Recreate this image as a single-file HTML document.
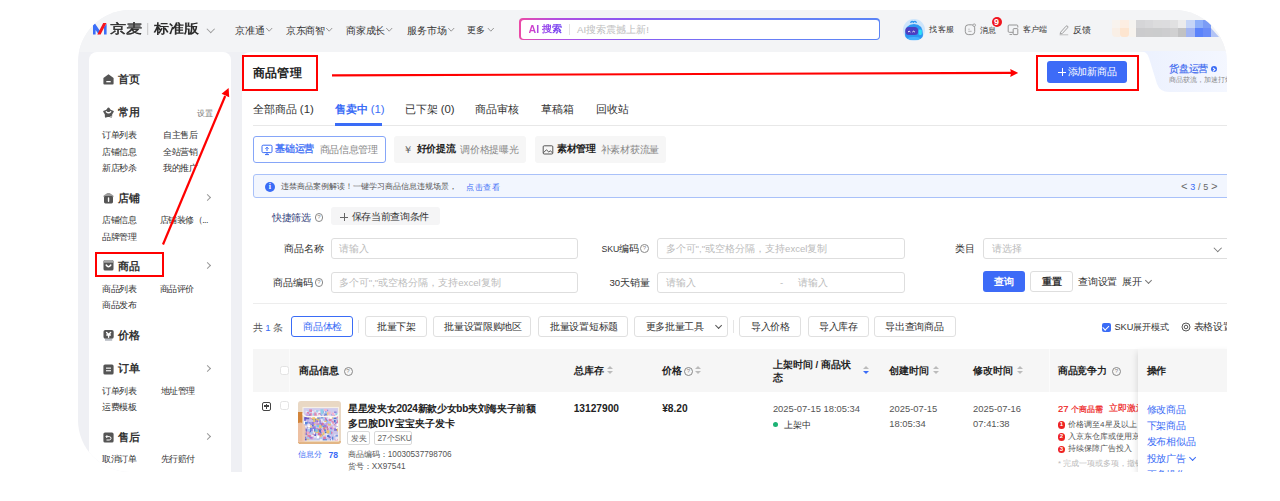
<!DOCTYPE html>
<html><head><meta charset="utf-8">
<style>
html,body{margin:0;padding:0;background:#fff;width:1280px;height:501px;overflow:hidden;font-family:"Liberation Sans",sans-serif;}
#frame{position:absolute;left:78px;top:10px;width:1149px;height:462px;background:#eff0f4;border-radius:52px 53px 0 52px;overflow:hidden;}
#in{position:absolute;left:-78px;top:-10px;width:1280px;height:501px;}
.a{position:absolute;}
.t{position:absolute;white-space:nowrap;line-height:1;color:#333;}
.b{font-weight:bold;}
.chev{position:absolute;width:4px;height:4px;border-right:1px solid #888;border-bottom:1px solid #888;transform:rotate(45deg);}
.rchev{position:absolute;width:4px;height:4px;border-right:1px solid #999;border-bottom:1px solid #999;transform:rotate(-45deg);}
.box{position:absolute;box-sizing:border-box;}
</style></head><body>
<div id="frame"><div id="in">

<!-- ===== HEADER ===== -->
<div class="a" style="left:0;top:0;width:1280px;height:51.5px;background:#f3f4f6"></div>
<svg class="a" style="left:0;top:0" width="1280" height="60">
  <polygon points="93,24.3 94.8,23.2 100.2,31.2 98.6,34.6 95.6,30 95.6,34.6 93,34.6" fill="#3b6ef8"/>
  <polygon points="104,27 106.6,23.8 106.6,34.6 104,34.6" fill="#3b6ef8"/>
  <polygon points="103.2,23 106.5,23 100.6,34.6 97.3,34.6" fill="#f5141e"/>
  <rect x="147.2" y="23" width="1" height="12" fill="#c8c8c8"/>
</svg>
<div class="t" style="left:110.2px;top:23px;font-size:12.6px;color:#2b2b2b;-webkit-text-stroke:0.45px #2b2b2b;transform:scaleX(1.24);transform-origin:0 0">京麦</div>
<div class="t b" style="left:153.6px;top:22.8px;font-size:12.6px;color:#2b2b2b;transform:scaleX(1.15);transform-origin:0 0">标准版</div>
<div class="chev" style="left:208px;top:26px;width:4.5px;height:4.5px;border-color:#999"></div>

<div class="t" style="left:234.5px;top:25.6px;font-size:9.6px">京准通</div>
<div class="t" style="left:286px;top:25.6px;font-size:9.6px;letter-spacing:-0.4px">京东商智</div>
<div class="t" style="left:346.4px;top:25.6px;font-size:9.6px;letter-spacing:-0.4px">商家成长</div>
<div class="t" style="left:406.5px;top:25.6px;font-size:9.8px">服务市场</div>
<div class="t" style="left:467px;top:25.6px;font-size:9.2px">更多</div>
<svg class="a" style="left:0;top:0" width="520" height="40" fill="none" stroke="#8c8c8c" stroke-width="0.9">
<polyline points="266.2,28 269.2,31.2 272.2,28"/><polyline points="326.2,28 329.2,31.2 332.2,28"/><polyline points="386.2,28 389.2,31.2 392.2,28"/><polyline points="448.2,28 451.2,31.2 454.2,28"/><polyline points="487.8,28 490.8,31.2 493.8,28"/>
</svg>
<!-- search -->
<div class="box" style="left:519.4px;top:18.4px;width:361px;height:21.8px;border-radius:4px;background:linear-gradient(90deg,#ec4aa6 0%,#b44ee0 10%,#8a58f2 30%,#6a7ef6 65%,#5b84f6 100%);"></div>
<div class="box" style="left:520.8px;top:19.8px;width:358.2px;height:19px;border-radius:3px;background:#fff;"></div>
<div class="t b" style="left:528.6px;top:24.2px;font-size:10.6px;background:linear-gradient(90deg,#e03cc0,#a848e6);-webkit-background-clip:text;color:transparent">AI</div>
<div class="t b" style="left:541.8px;top:24.3px;font-size:10px;background:linear-gradient(90deg,#a048ea,#6a3cf2);-webkit-background-clip:text;color:transparent">搜索</div>
<div class="a" style="left:569px;top:24px;width:1px;height:11px;background:#e2e2e2"></div>
<div class="t" style="left:577px;top:25.3px;font-size:9.7px;color:#bdbdbd">AI搜索震撼上新!</div>

<!-- right tools -->
<svg class="a" style="left:900px;top:15px" width="30" height="30" viewBox="0 0 30 30">
  <circle cx="14" cy="15" r="11" fill="#cde5fb"/>
  <path d="M5 20 Q5 9 14 9 Q23 9 23 20 Q23 25 14 25 Q5 25 5 20Z" fill="#2d97f2"/>
  <rect x="5.3" y="12" width="12.8" height="8" rx="3.5" fill="#4b3fc2"/>
  <path d="M8 17 q1.2 -1.6 2.4 0 M12.4 17 q1.2 -1.6 2.4 0" stroke="#fff" stroke-width="1" fill="none"/>
  <rect x="18.6" y="14.5" width="3.2" height="5.5" rx="1.2" fill="#2ee0f8"/>
  <path d="M10.5 7.8 q1.5 -2.2 3 -0.6 q1.5 -2 3 0.6" stroke="#2d97f2" stroke-width="1.4" fill="none"/>
  <ellipse cx="14" cy="23.5" rx="6" ry="1.6" fill="#45b4ff"/>
</svg>
<div class="t" style="left:929.4px;top:26px;font-size:8.2px;letter-spacing:0.4px">找客服</div>
<svg class="a" style="left:963px;top:23px" width="14" height="14" viewBox="0 0 14 14">
  <rect x="2.3" y="1.8" width="9.4" height="9.8" rx="3" fill="none" stroke="#8a8a8a" stroke-width="0.9"/>
  <line x1="5.2" y1="6.2" x2="6.8" y2="6.2" stroke="#999" stroke-width="0.6"/>
  <line x1="5.2" y1="8.3" x2="8.6" y2="8.3" stroke="#999" stroke-width="0.7"/>
  <circle cx="11.2" cy="2.2" r="1.3" fill="#f4f5f7" stroke="#8a8a8a" stroke-width="0.7"/>
</svg>
<div class="t" style="left:979.8px;top:25.6px;font-size:8.4px;letter-spacing:0.7px">消息</div>
<div class="a" style="left:991.6px;top:17px;width:10px;height:10px;border-radius:50%;background:#f0141e;color:#fff;font-size:9px;line-height:10px;text-align:center;font-weight:bold">9</div>
<svg class="a" style="left:1007px;top:24px" width="12" height="12" viewBox="0 0 12 12">
  <path d="M6 8.3 H2.2 Q1.2 8.3 1.2 7.3 V2 Q1.2 1 2.2 1 H9.8 Q10.8 1 10.8 2 V3.5" fill="none" stroke="#8a8a8a" stroke-width="0.9"/>
  <rect x="6.2" y="4.6" width="4.6" height="6" rx="0.8" fill="none" stroke="#8a8a8a" stroke-width="0.9"/>
  <line x1="2.5" y1="10.5" x2="5.2" y2="10.5" stroke="#8a8a8a" stroke-width="0.8"/>
</svg>
<div class="t" style="left:1022.6px;top:26.3px;font-size:8.2px;letter-spacing:0.35px">客户端</div>
<svg class="a" style="left:1058px;top:24px" width="12" height="12" viewBox="0 0 12 12">
  <path d="M2.6 8.2 L8 2.2 Q8.8 1.4 9.6 2.2 Q10.4 3 9.6 3.8 L4.2 9.6 L2.2 9.9Z" fill="none" stroke="#8a8a8a" stroke-width="0.8"/>
  <line x1="1.5" y1="10.8" x2="10.2" y2="10.8" stroke="#aaa" stroke-width="0.7"/>
</svg>
<div class="t" style="left:1073px;top:26px;font-size:8.6px">反馈</div>

<!-- mosaic -->
<div class="a" style="left:1112px;top:20px;width:107px;height:17px;">
  <div class="a" style="left:0;top:0;width:8px;height:8px;background:#f8f3ee"></div>
  <div class="a" style="left:0;top:8px;width:8px;height:9px;background:#f9efe6;border-bottom-left-radius:4px"></div>
  <div class="a" style="left:8px;top:0;width:8.5px;height:8px;background:#fdeee2"></div>
  <div class="a" style="left:8px;top:8px;width:8.5px;height:9px;background:#fde5d0;border-bottom-left-radius:3px;border-bottom-right-radius:3px"></div>
  <div class="a" style="left:16.5px;top:0;width:7.5px;height:8px;background:#f5f3f0"></div>
  <div class="a" style="left:16.5px;top:8px;width:7.5px;height:9px;background:#f7f3ee"></div>
  <div class="a" style="left:24px;top:0;width:8.5px;height:8px;background:#d5d5d7"></div>
  <div class="a" style="left:24px;top:8px;width:8.5px;height:9px;background:#cbcbcd"></div>
  <div class="a" style="left:32.5px;top:0;width:8.5px;height:8px;background:#d8d8da"></div>
  <div class="a" style="left:32.5px;top:8px;width:8.5px;height:9px;background:#cccccd"></div>
  <div class="a" style="left:41px;top:0;width:9px;height:8px;background:#dcdcdd"></div>
  <div class="a" style="left:41px;top:8px;width:9px;height:9px;background:#cbcccd"></div>
  <div class="a" style="left:50px;top:0;width:8px;height:8px;background:#dcdcde"></div>
  <div class="a" style="left:50px;top:8px;width:8px;height:9px;background:#cdcdcf"></div>
  <div class="a" style="left:58px;top:0;width:8px;height:8px;background:#e0e0e1"></div>
  <div class="a" style="left:58px;top:8px;width:8px;height:9px;background:#d0d0d1"></div>
  <div class="a" style="left:66px;top:0;width:8px;height:8px;background:#ebebec"></div>
  <div class="a" style="left:66px;top:8px;width:8px;height:9px;background:#c2c2c3"></div>
  <div class="a" style="left:74px;top:0;width:8.5px;height:8px;background:#c5d5f7"></div>
  <div class="a" style="left:74px;top:8px;width:8.5px;height:9px;background:#a2b5f2"></div>
  <div class="a" style="left:82.5px;top:0;width:8.5px;height:8px;background:#8eb0fa"></div>
  <div class="a" style="left:82.5px;top:8px;width:8.5px;height:9px;background:#5b83fb"></div>
  <div class="a" style="left:91px;top:0;width:8px;height:8px;background:#7b9cf5;border-top-right-radius:5px"></div>
  <div class="a" style="left:91px;top:8px;width:8px;height:9px;background:#6a8cf8"></div>
  <div class="a" style="left:99px;top:8px;width:8px;height:9px;background:#b3c4f5;clip-path:polygon(0 0,0 100%,100% 100%)"></div>
</div>

<!-- ===== SIDEBAR ===== -->
<div class="box" style="left:88.8px;top:51.5px;width:142px;height:440px;background:#fff;border-radius:8px 8px 0 0"></div>
<svg width="0" height="0" style="position:absolute"><defs>
<g id="ic-home"><path d="M5.5 0.3 L10.6 4 V9.6 Q10.6 10.6 9.6 10.6 H1.4 Q0.4 10.6 0.4 9.6 V4Z" fill="#555"/><rect x="3.3" y="7" width="4.4" height="1.3" fill="#fff"/></g>
<g id="ic-star"><polygon points="5.50,1.40 7.26,3.57 9.87,4.58 8.35,6.93 8.20,9.72 5.50,9.00 2.80,9.72 2.65,6.93 1.13,4.58 3.74,3.57" fill="#555" stroke="#555" stroke-width="1.8" stroke-linejoin="round"/><path d="M6.6 9.6 L9.2 8.6 L8.6 10.6Z" fill="#bbb"/><path d="M3.3 4.7 Q5.5 6.8 7.7 4.7" stroke="#fff" stroke-width="1.3" fill="none" stroke-linecap="round"/></g>
<g id="ic-shop"><path d="M0.2 3.8 Q0.2 2.6 1.4 2 L4.4 0 H6.6 L9.6 2 Q10.8 2.6 10.8 3.8Z" fill="#9a9a9a"/><rect x="1" y="3" width="9" height="7.4" rx="1.4" fill="#555"/><rect x="4.85" y="4.3" width="1.4" height="4.6" rx="0.7" fill="#fff"/></g>
<g id="ic-goods"><rect x="0.5" y="0" width="10" height="10.5" rx="1.6" fill="#555"/><path d="M0.5 2.8 V1.6 Q0.5 0 2.1 0 H8.9 Q10.5 0 10.5 1.6 V2.8Z" fill="#a8a8a8"/><path d="M3.2 5 Q5.5 8.4 7.8 5" stroke="#fff" stroke-width="1.5" fill="none" stroke-linecap="round"/></g>
<g id="ic-price"><rect x="0.5" y="0" width="10.2" height="8.8" rx="1.8" fill="#555"/><rect x="2" y="8.8" width="7.2" height="2" fill="#b8bcc4"/><path d="M3.6 2.6 L5.6 4.6 L7.6 2.6 M5.6 4.4 V7.2 M3.8 5 H7.4" stroke="#fff" stroke-width="1.4" fill="none" stroke-linecap="round"/></g>
<g id="ic-order"><rect x="0.4" y="0.4" width="10.2" height="10.2" rx="1.6" fill="#555"/><rect x="3" y="3.6" width="5" height="1.1" fill="#fff"/><rect x="3" y="6.2" width="5" height="1.1" fill="#fff"/></g>
<g id="ic-after"><rect x="0.4" y="0.4" width="10.2" height="10.2" rx="1.6" fill="#555"/><path d="M4.2 3.2 L3 4.6 L4.2 6 M3 4.6 H6.2 Q8 4.6 8 6.3 Q8 8 6.2 8 H3.5" stroke="#fff" stroke-width="1" fill="none"/></g>
</defs></svg>
<div class="t" style="left:117.6px;top:74.00px;font-size:11px;color:#333;font-weight:bold">首页</div>
<svg class="a" style="left:103px;top:74.3px" width="11" height="11" viewBox="0 0 11 11"><use href="#ic-home"/></svg>
<div class="t" style="left:117.6px;top:107.00px;font-size:11px;color:#333;font-weight:bold">常用</div>
<svg class="a" style="left:103px;top:107.3px" width="11" height="11" viewBox="0 0 11 11"><use href="#ic-star"/></svg>
<div class="t" style="left:117.6px;top:192.50px;font-size:11px;color:#333;font-weight:bold">店铺</div>
<svg class="a" style="left:103px;top:192.8px" width="11" height="11" viewBox="0 0 11 11"><use href="#ic-shop"/></svg>
<div class="t" style="left:117.6px;top:260.80px;font-size:11px;color:#333;font-weight:bold">商品</div>
<svg class="a" style="left:103px;top:260.3px" width="11" height="11" viewBox="0 0 11 11"><use href="#ic-goods"/></svg>
<div class="t" style="left:117.6px;top:330.10px;font-size:11px;color:#333;font-weight:bold">价格</div>
<svg class="a" style="left:103px;top:330px" width="11" height="11" viewBox="0 0 11 11"><use href="#ic-price"/></svg>
<div class="t" style="left:117.6px;top:363.30px;font-size:11px;color:#333;font-weight:bold">订单</div>
<svg class="a" style="left:103px;top:363.6px" width="11" height="11" viewBox="0 0 11 11"><use href="#ic-order"/></svg>
<div class="t" style="left:117.6px;top:431.50px;font-size:11px;color:#333;font-weight:bold">售后</div>
<svg class="a" style="left:103px;top:431.8px" width="11" height="11" viewBox="0 0 11 11"><use href="#ic-after"/></svg>
<div class="rchev" style="left:205px;top:194.8px"></div>
<div class="rchev" style="left:205px;top:263.1px"></div>
<div class="rchev" style="left:205px;top:365.6px"></div>
<div class="rchev" style="left:205px;top:433.8px"></div>
<div class="t" style="left:197px;top:108.85px;font-size:8.3px;color:#777;">设置</div>
<div class="t" style="left:102.2px;top:131.20px;font-size:8.6px;color:#333;letter-spacing:-0.5px;">订单列表</div>
<div class="t" style="left:163.3px;top:131.20px;font-size:8.6px;color:#333;letter-spacing:-0.5px;">自主售后</div>
<div class="t" style="left:102.2px;top:147.70px;font-size:8.6px;color:#333;letter-spacing:-0.5px;">店铺信息</div>
<div class="t" style="left:163.3px;top:147.70px;font-size:8.6px;color:#333;letter-spacing:-0.5px;">全站营销</div>
<div class="t" style="left:102.2px;top:163.70px;font-size:8.6px;color:#333;letter-spacing:-0.5px;">新店秒杀</div>
<div class="t" style="left:163.3px;top:163.70px;font-size:8.6px;color:#333;letter-spacing:-0.5px;">我的推广</div>
<div class="t" style="left:102.2px;top:216.20px;font-size:8.6px;color:#333;letter-spacing:-0.5px;">店铺信息</div>
<div class="t" style="left:159.7px;top:216.20px;font-size:8.6px;color:#333;letter-spacing:-0.5px;">店铺装修（...</div>
<div class="t" style="left:102.2px;top:232.70px;font-size:8.6px;color:#333;letter-spacing:-0.5px;">品牌管理</div>
<div class="t" style="left:102.2px;top:285.00px;font-size:8.6px;color:#333;letter-spacing:-0.5px;">商品列表</div>
<div class="t" style="left:159.7px;top:285.00px;font-size:8.6px;color:#333;letter-spacing:-0.5px;">商品评价</div>
<div class="t" style="left:102.2px;top:301.00px;font-size:8.6px;color:#333;letter-spacing:-0.5px;">商品发布</div>
<div class="t" style="left:102.2px;top:386.50px;font-size:8.6px;color:#333;letter-spacing:-0.5px;">订单列表</div>
<div class="t" style="left:160.7px;top:386.50px;font-size:8.6px;color:#333;letter-spacing:-0.5px;">地址管理</div>
<div class="t" style="left:102.2px;top:403.20px;font-size:8.6px;color:#333;letter-spacing:-0.5px;">运费模板</div>
<div class="t" style="left:102.2px;top:455.20px;font-size:8.6px;color:#333;letter-spacing:-0.5px;">取消订单</div>
<div class="t" style="left:160.7px;top:455.20px;font-size:8.6px;color:#333;letter-spacing:-0.5px;">先行赔付</div>

<!-- ===== MAIN ===== -->
<div class="box" style="left:241.8px;top:51.5px;width:1000px;height:440px;background:#fff;border-radius:8px 0 0 0"></div>
<!-- MAINSTART -->
<div class="t" style="left:252.6px;top:67.35px;font-size:12.1px;color:#222;letter-spacing:0.34px;font-weight:bold">商品管理</div>
<svg class="a" style="left:1130px;top:51px" width="100" height="42" viewBox="1130 51 100 42"><defs><linearGradient id="pg" x1="0" x2="1"><stop offset="0" stop-color="#ecf1fe"/><stop offset="1" stop-color="#f4f7ff"/></linearGradient></defs><path d="M1140 51 Q1147 51 1149 58 L1157 84 Q1160 92 1169 92 L1230 92 L1230 51Z" fill="url(#pg)"/></svg>
<div class="t" style="left:1169.2px;top:64.10px;font-size:9.6px;color:#3563ee;letter-spacing:-0.23px;-webkit-text-stroke:0.15px #3563ee">货盘运营</div>
<div class="a" style="left:1210.8px;top:65.8px;width:6.4px;height:6.4px;border-radius:50%;background:#3b6cf5"></div>
<div class="a" style="left:1212.4px;top:67.8px;width:1.8px;height:1.8px;border-right:0.8px solid #fff;border-top:0.8px solid #fff;transform:rotate(45deg)"></div>
<div class="t" style="left:1169.2px;top:77.35px;font-size:6.9px;color:#888;">商品获流，加速打爆</div>
<div class="box" style="left:1046.6px;top:61.1px;width:80.10px;height:21.60px;background:#3d6bf7;border-radius:3px"></div>
<div class="box" style="left:1058px;top:71.6px;width:8.00px;height:1.10px;background:#fff"></div>
<div class="box" style="left:1061.5px;top:67.9px;width:1.10px;height:8.40px;background:#fff"></div>
<div class="t" style="left:1067.5px;top:66.95px;font-size:9.7px;color:#fff;letter-spacing:-0.24px;">添加新商品</div>
<div class="t" style="left:252.7px;top:104.20px;font-size:11.4px;color:#333;">全部商品<span style="font-weight:normal"> (1)</span></div>
<div class="t" style="left:334.5px;top:104.20px;font-size:11.4px;color:#3a6cf6;font-weight:bold">售卖中<span style="font-weight:normal"> (1)</span></div>
<div class="t" style="left:404.5px;top:104.20px;font-size:11.4px;color:#333;">已下架<span style="font-weight:normal"> (0)</span></div>
<div class="t" style="left:475px;top:104.20px;font-size:11.4px;color:#333;">商品审核</div>
<div class="t" style="left:541px;top:104.20px;font-size:11.4px;color:#333;">草稿箱</div>
<div class="t" style="left:596px;top:104.20px;font-size:11.4px;color:#333;">回收站</div>
<div class="box" style="left:253px;top:124.7px;width:977.00px;height:1.00px;background:#e8e8e8"></div>
<div class="box" style="left:334.6px;top:123.4px;width:47.20px;height:2.30px;background:#3a6cf6"></div>
<div class="box" style="left:253px;top:136.2px;width:133.00px;height:26.80px;border:1px solid #86a6f8;border-radius:3px;background:#fff"></div>
<svg class="a" style="left:261px;top:144px" width="12" height="12" viewBox="0 0 12 12"><rect x="1" y="1.2" width="10" height="7.4" rx="1.2" fill="none" stroke="#3a6cf6" stroke-width="1"/><path d="M6 7 V3.3 M4.4 4.8 L6 3.2 L7.6 4.8" stroke="#3a6cf6" stroke-width="1" fill="none"/><path d="M4 10.6 H8 M6 8.6 V10.6" stroke="#3a6cf6" stroke-width="1"/></svg>
<div class="t" style="left:275.3px;top:144.40px;font-size:9.6px;color:#3a6cf6;letter-spacing:-0.27px;-webkit-text-stroke:0.3px #3a6cf6">基础运营</div>
<div class="t" style="left:319.6px;top:144.95px;font-size:9.5px;color:#888;letter-spacing:-0.34px;">商品信息管理</div>
<div class="box" style="left:394px;top:136.2px;width:132.00px;height:26.80px;background:#f6f6f6;border-radius:3px"></div>
<div class="t" style="left:402.8px;top:144.70px;font-size:9.6px;color:#555;">￥</div>
<div class="t" style="left:416.5px;top:144.40px;font-size:9.6px;color:#222;letter-spacing:-0.20px;font-weight:bold">好价提流</div>
<div class="t" style="left:460.2px;top:144.90px;font-size:9.6px;color:#888;letter-spacing:-0.25px;">调价格提曝光</div>
<div class="box" style="left:535px;top:136.2px;width:131.40px;height:26.80px;background:#f6f6f6;border-radius:3px"></div>
<svg class="a" style="left:542px;top:144px" width="12" height="12" viewBox="0 0 12 12"><rect x="1.2" y="1.8" width="9.6" height="8.2" rx="1" fill="none" stroke="#444" stroke-width="0.9"/><path d="M1.6 8.6 L4.4 5.8 L6.8 8 L8.2 6.8 L10.4 8.6" stroke="#444" stroke-width="0.9" fill="none"/></svg>
<div class="t" style="left:557px;top:144.40px;font-size:9.6px;color:#222;letter-spacing:-0.40px;font-weight:bold">素材管理</div>
<div class="t" style="left:600.6px;top:144.90px;font-size:9.6px;color:#888;letter-spacing:-0.25px;">补素材获流量</div>
<div class="box" style="left:253px;top:174.3px;width:987.00px;height:24.20px;background:#f2f6fe;border:1px solid #a9c1f9;border-radius:3px"></div>
<div class="a" style="left:264.8px;top:181.8px;width:10px;height:10px;border-radius:50%;background:#3a6cf6;color:#fff;font-size:8px;line-height:10px;text-align:center;font-weight:bold;font-family:Liberation Serif,serif">i</div>
<div class="t" style="left:281px;top:183.00px;font-size:8.0px;color:#555;">违禁商品案例解读！一键学习商品信息违规场景，</div>
<div class="t" style="left:466px;top:182.80px;font-size:8.4px;color:#3a6cf6;letter-spacing:0.65px;">点击查看</div>
<div class="t" style="left:1181px;top:182.30px;font-size:9px;color:#666;letter-spacing:0.1px"><span style="font-size:11px;font-family:Liberation Mono">&lt;</span> <span style="color:#3a6cf6">3</span> / 5 <span style="font-size:11px;font-family:Liberation Mono">&gt;</span></div>
<div class="t" style="left:271.8px;top:212.50px;font-size:9.6px;color:#33407a;letter-spacing:-0.20px;">快捷筛选</div>
<div class="a" style="left:314.5px;top:213.4px;width:6.8px;height:6.8px;border:0.8px solid #888;border-radius:50%;color:#888;font-size:6px;line-height:6.8px;text-align:center">?</div>
<div class="box" style="left:331px;top:207.4px;width:108.60px;height:18.10px;background:#f5f5f6;border-radius:3px"></div>
<div class="box" style="left:340.3px;top:216.6px;width:7.80px;height:0.90px;background:#666"></div>
<div class="box" style="left:343.75px;top:212.9px;width:0.90px;height:8.20px;background:#666"></div>
<div class="t" style="left:351.6px;top:211.80px;font-size:9.6px;color:#333;letter-spacing:-0.32px;">保存当前查询条件</div>
<div class="t" style="left:284.2px;top:243.80px;font-size:9.6px;color:#333;letter-spacing:-0.20px;">商品名称</div>
<div class="box" style="left:331px;top:238.3px;width:247.20px;height:21.20px;border:1px solid #dedede;border-radius:3px"></div>
<div class="t" style="left:338.8px;top:244.20px;font-size:9.6px;color:#bbb;">请输入</div>
<div class="t" style="left:601.4px;top:243.60px;font-size:9.6px;color:#333;"><span style="font-size:8.7px">SKU</span>编码</div>
<div class="a" style="left:640px;top:244.3px;width:6.8px;height:6.8px;border:0.8px solid #888;border-radius:50%;color:#888;font-size:6px;line-height:6.8px;text-align:center">?</div>
<div class="box" style="left:657.4px;top:238.3px;width:247.60px;height:21.20px;border:1px solid #dedede;border-radius:3px"></div>
<div class="t" style="left:665.6px;top:244.40px;font-size:9.2px;color:#bbb;font-size:9.6px">多个可","或空格分隔，支持excel复制</div>
<div class="t" style="left:955.4px;top:243.80px;font-size:9.6px;color:#333;">类目</div>
<div class="box" style="left:983.4px;top:237.7px;width:256.60px;height:21.20px;border:1px solid #dedede;border-radius:3px"></div>
<div class="t" style="left:991.8px;top:243.80px;font-size:9.6px;color:#bbb;">请选择</div>
<div class="chev" style="left:1215px;top:244.8px;width:4.5px;height:4.5px;border-color:#777"></div>
<div class="t" style="left:273.2px;top:277.50px;font-size:9.6px;color:#333;">商品编码</div>
<div class="a" style="left:314.5px;top:278.4px;width:6.8px;height:6.8px;border:0.8px solid #888;border-radius:50%;color:#888;font-size:6px;line-height:6.8px;text-align:center">?</div>
<div class="box" style="left:331px;top:271.5px;width:247.20px;height:21.30px;border:1px solid #dedede;border-radius:3px"></div>
<div class="t" style="left:338.8px;top:277.90px;font-size:9.2px;color:#bbb;font-size:9.6px">多个可","或空格分隔，支持excel复制</div>
<div class="t" style="left:609.5px;top:277.60px;font-size:9.6px;color:#333;">30天销量</div>
<div class="box" style="left:657.4px;top:271.5px;width:247.60px;height:21.30px;border:1px solid #dedede;border-radius:3px"></div>
<div class="t" style="left:665.6px;top:277.70px;font-size:9.6px;color:#bbb;">请输入</div>
<div class="t" style="left:780px;top:277.70px;font-size:9.6px;color:#bbb;">-</div>
<div class="t" style="left:797.6px;top:277.70px;font-size:9.6px;color:#bbb;">请输入</div>
<div class="box" style="left:983.4px;top:271.1px;width:41.20px;height:21.40px;background:#3d6bf7;border-radius:3px"></div>
<div class="t" style="left:994.4px;top:276.90px;font-size:9.8px;color:#fff;font-weight:bold">查询</div>
<div class="box" style="left:1030px;top:271.1px;width:42.50px;height:21.40px;border:1px solid #dedede;border-radius:3px;background:#fff"></div>
<div class="t" style="left:1041.7px;top:276.95px;font-size:9.7px;color:#333;font-weight:bold">重置</div>
<div class="t" style="left:1078px;top:277.15px;font-size:9.7px;color:#333;letter-spacing:-0.20px;">查询设置</div>
<div class="t" style="left:1122px;top:277.15px;font-size:9.7px;color:#333;">展开</div>
<div class="chev" style="left:1146px;top:278.4px;width:4px;height:4px;border-color:#777"></div>
<div class="box" style="left:253px;top:303.4px;width:987.00px;height:1.00px;background:#ededed"></div>
<div class="t" style="left:252.7px;top:322.60px;font-size:9.6px;color:#555;">共 <span style="color:#3a6cf6">1</span> 条</div>
<div class="box" style="left:291.2px;top:315.5px;width:61.60px;height:21.80px;border:1px solid #3a6cf6;border-radius:3px"></div>
<div class="t" style="left:303px;top:321.80px;font-size:9.6px;color:#3a6cf6;letter-spacing:-0.20px;">商品体检</div>
<div class="box" style="left:365px;top:315.5px;width:61.60px;height:21.80px;border:1px solid #e0e0e0;border-radius:3px"></div>
<div class="t" style="left:377px;top:321.80px;font-size:9.6px;color:#333;letter-spacing:-0.28px;">批量下架</div>
<div class="box" style="left:432.5px;top:315.5px;width:98.90px;height:21.80px;border:1px solid #e0e0e0;border-radius:3px"></div>
<div class="t" style="left:444.3px;top:321.80px;font-size:9.6px;color:#333;letter-spacing:-0.33px;">批量设置限购地区</div>
<div class="box" style="left:538.2px;top:315.5px;width:89.80px;height:21.80px;border:1px solid #e0e0e0;border-radius:3px"></div>
<div class="t" style="left:550px;top:321.80px;font-size:9.6px;color:#333;letter-spacing:-0.30px;">批量设置短标题</div>
<div class="box" style="left:634.3px;top:315.5px;width:93.30px;height:21.80px;border:1px solid #e0e0e0;border-radius:3px"></div>
<div class="t" style="left:645.5px;top:321.80px;font-size:9.6px;color:#333;letter-spacing:-0.30px;">更多批量工具</div>
<div class="box" style="left:739.3px;top:315.5px;width:61.90px;height:21.80px;border:1px solid #e0e0e0;border-radius:3px"></div>
<div class="t" style="left:751px;top:321.80px;font-size:9.6px;color:#333;letter-spacing:-0.30px;">导入价格</div>
<div class="box" style="left:807.5px;top:315.5px;width:61.20px;height:21.80px;border:1px solid #e0e0e0;border-radius:3px"></div>
<div class="t" style="left:819px;top:321.80px;font-size:9.6px;color:#333;letter-spacing:-0.30px;">导入库存</div>
<div class="box" style="left:874px;top:315.5px;width:81.80px;height:21.80px;border:1px solid #e0e0e0;border-radius:3px"></div>
<div class="t" style="left:885.2px;top:321.80px;font-size:9.6px;color:#333;letter-spacing:-0.30px;">导出查询商品</div>
<div class="chev" style="left:715.5px;top:322.6px;width:4.2px;height:4.2px;border-color:#555"></div>
<div class="box" style="left:358.4px;top:320px;width:1.00px;height:13.00px;background:#e5e5e5"></div>
<div class="box" style="left:733px;top:320px;width:1.00px;height:13.00px;background:#e5e5e5"></div>
<div class="box" style="left:1101.7px;top:322.7px;width:9.30px;height:9.30px;background:#3a6cf6;border-radius:2px"></div>
<div class="a" style="left:1104.2px;top:323.6px;width:2.6px;height:4.8px;border-right:1.2px solid #fff;border-bottom:1.2px solid #fff;transform:rotate(45deg)"></div>
<div class="t" style="left:1114.4px;top:322.60px;font-size:9.2px;color:#333;">SKU展开模式</div>
<svg class="a" style="left:1181px;top:322px" width="10" height="10" viewBox="0 0 10 10"><circle cx="5" cy="5" r="4" fill="none" stroke="#444" stroke-width="0.9"/><circle cx="5" cy="5" r="1.8" fill="none" stroke="#444" stroke-width="0.9"/></svg>
<div class="t" style="left:1193.5px;top:322.40px;font-size:9.6px;color:#333;letter-spacing:-0.30px;">表格设置</div>
<div class="box" style="left:252.7px;top:348.5px;width:987.30px;height:43.00px;background:#f6f6f6"></div>
<div class="box" style="left:289px;top:348.5px;width:1.00px;height:43.00px;background:#fbfbfb"></div>
<div class="box" style="left:1049px;top:348.5px;width:1.00px;height:43.00px;background:#fbfbfb"></div>
<div class="box" style="left:280.4px;top:365.9px;width:9.10px;height:9.50px;background:#fff;border:1px solid #e3e3e3;border-radius:2.5px"></div>
<div class="t" style="left:299px;top:365.60px;font-size:10px;color:#222;letter-spacing:-0.10px;font-weight:bold">商品信息</div>
<div class="a" style="left:343.5px;top:366.8px;width:7px;height:7px;border:0.9px solid #888;border-radius:50%;color:#888;font-size:6px;line-height:7px;text-align:center">?</div>
<div class="t" style="left:573.7px;top:365.80px;font-size:9.6px;color:#222;font-weight:bold">总库存</div>
<div class="a" style="left:607px;top:366.3px;width:0;height:0;border-left:3px solid transparent;border-right:3px solid transparent;border-bottom:3.5px solid #bbb"></div><div class="a" style="left:607px;top:371.2px;width:0;height:0;border-left:3px solid transparent;border-right:3px solid transparent;border-top:3.5px solid #bbb"></div>
<div class="t" style="left:662.2px;top:365.80px;font-size:9.6px;color:#222;font-weight:bold">价格</div>
<div class="a" style="left:684px;top:366.8px;width:7px;height:7px;border:0.9px solid #888;border-radius:50%;color:#888;font-size:6px;line-height:7px;text-align:center">?</div>
<div class="a" style="left:695px;top:366.3px;width:0;height:0;border-left:3px solid transparent;border-right:3px solid transparent;border-bottom:3.5px solid #bbb"></div><div class="a" style="left:695px;top:371.2px;width:0;height:0;border-left:3px solid transparent;border-right:3px solid transparent;border-top:3.5px solid #bbb"></div>
<div class="t" style="left:772.9px;top:359.70px;font-size:9.6px;color:#222;font-weight:bold">上架时间 / 商品状</div>
<div class="t" style="left:772.9px;top:373.30px;font-size:9.6px;color:#222;font-weight:bold">态</div>
<div class="a" style="left:862.6px;top:366.3px;width:0;height:0;border-left:3px solid transparent;border-right:3px solid transparent;border-bottom:3.5px solid #bbb"></div><div class="a" style="left:862.6px;top:371.2px;width:0;height:0;border-left:3px solid transparent;border-right:3px solid transparent;border-top:3.5px solid #3a6cf6"></div>
<div class="t" style="left:889.3px;top:365.70px;font-size:9.8px;color:#222;font-weight:bold">创建时间</div>
<div class="a" style="left:933.2px;top:366.3px;width:0;height:0;border-left:3px solid transparent;border-right:3px solid transparent;border-bottom:3.5px solid #bbb"></div><div class="a" style="left:933.2px;top:371.2px;width:0;height:0;border-left:3px solid transparent;border-right:3px solid transparent;border-top:3.5px solid #bbb"></div>
<div class="t" style="left:973.1px;top:365.70px;font-size:9.8px;color:#222;font-weight:bold">修改时间</div>
<div class="a" style="left:1017px;top:366.3px;width:0;height:0;border-left:3px solid transparent;border-right:3px solid transparent;border-bottom:3.5px solid #bbb"></div><div class="a" style="left:1017px;top:371.2px;width:0;height:0;border-left:3px solid transparent;border-right:3px solid transparent;border-top:3.5px solid #bbb"></div>
<div class="t" style="left:1058.1px;top:365.80px;font-size:9.6px;color:#222;letter-spacing:-0.30px;font-weight:bold">商品竞争力</div>
<div class="a" style="left:1112px;top:366.8px;width:7px;height:7px;border:0.9px solid #888;border-radius:50%;color:#888;font-size:6px;line-height:7px;text-align:center">?</div>
<div class="a" style="left:261.8px;top:401.5px;width:7.4px;height:7.4px;border:1.1px solid #444;border-radius:2px"></div>
<div class="a" style="left:263.9px;top:405.4px;width:5.4px;height:1.3px;background:#444"></div>
<div class="a" style="left:265.9px;top:403.5px;width:1.3px;height:5.3px;background:#444"></div>
<div class="box" style="left:280.4px;top:401.4px;width:9.10px;height:9.10px;background:#fff;border:1px solid #e3e3e3;border-radius:2.5px"></div>
<svg class="a" style="left:298.4px;top:401.2px" width="43" height="43" viewBox="0 0 43 43">
<defs><clipPath id="pc"><rect x="0" y="0" width="43" height="43" rx="3"/></clipPath><clipPath id="bag"><rect x="5" y="6.5" width="35.5" height="33.5"/></clipPath></defs>
<g clip-path="url(#pc)">
<rect width="43" height="43" fill="#e9d8c4"/>
<rect x="0" y="11" width="6" height="32" fill="#d2843a"/>
<rect x="0" y="40" width="43" height="3" fill="#e3b685"/>
<g clip-path="url(#bag)"><rect x="5" y="6.5" width="35.5" height="33.5" fill="#c8c4ea"/><rect x="16.7" y="12.7" width="2.5" height="1.3" fill="#4f74d0"/><rect x="9.1" y="26.1" width="3.0" height="1.6" fill="#7f6fd6"/><rect x="20.3" y="10.2" width="1.4" height="2.0" fill="#ffffff"/><rect x="24.7" y="37.4" width="2.5" height="2.4" fill="#5a86dc"/><rect x="25.0" y="20.3" width="3.2" height="1.3" fill="#ffffff"/><rect x="10.4" y="21.0" width="2.3" height="2.3" fill="#4f74d0"/><rect x="32.9" y="13.6" width="2.4" height="2.5" fill="#f4f2f4"/><rect x="9.2" y="30.1" width="2.3" height="2.4" fill="#d86fa0"/><rect x="28.5" y="21.3" width="1.8" height="2.4" fill="#d86fa0"/><rect x="17.9" y="15.7" width="1.6" height="2.8" fill="#7f6fd6"/><rect x="25.0" y="24.3" width="3.0" height="2.7" fill="#eec46a"/><rect x="26.1" y="10.3" width="2.2" height="1.5" fill="#f4f2f4"/><rect x="11.0" y="23.2" width="1.3" height="2.5" fill="#6a58c4"/><rect x="24.4" y="32.5" width="2.8" height="1.9" fill="#f4f2f4"/><rect x="25.6" y="26.0" width="2.1" height="2.9" fill="#eec46a"/><rect x="21.6" y="28.6" width="1.3" height="2.6" fill="#f2a6c4"/><rect x="25.1" y="29.1" width="2.1" height="2.6" fill="#e8e4f4"/><rect x="28.1" y="8.7" width="2.1" height="1.5" fill="#7f6fd6"/><rect x="22.3" y="14.8" width="1.8" height="2.7" fill="#a8c4f0"/><rect x="18.9" y="35.0" width="1.4" height="2.1" fill="#4f74d0"/><rect x="15.2" y="12.2" width="2.1" height="2.3" fill="#7cc6e6"/><rect x="19.7" y="19.1" width="3.0" height="3.1" fill="#9a7ad8"/><rect x="8.7" y="12.7" width="2.5" height="1.2" fill="#ffffff"/><rect x="25.4" y="16.1" width="1.2" height="2.0" fill="#f4f2f4"/><rect x="26.1" y="17.9" width="1.5" height="2.9" fill="#c29ae8"/><rect x="27.6" y="30.9" width="2.1" height="2.9" fill="#ffffff"/><rect x="28.5" y="25.3" width="2.0" height="2.0" fill="#d86fa0"/><rect x="26.9" y="9.9" width="1.3" height="1.6" fill="#9a7ad8"/><rect x="9.6" y="26.6" width="1.4" height="2.3" fill="#4f74d0"/><rect x="9.3" y="19.3" width="1.3" height="2.9" fill="#c29ae8"/><rect x="18.4" y="27.7" width="3.1" height="2.4" fill="#d86fa0"/><rect x="10.1" y="34.3" width="3.2" height="2.1" fill="#d86fa0"/><rect x="16.3" y="12.5" width="2.7" height="2.7" fill="#d86fa0"/><rect x="33.4" y="13.0" width="1.2" height="3.1" fill="#4f74d0"/><rect x="17.9" y="29.4" width="3.0" height="2.7" fill="#eec46a"/><rect x="38.3" y="34.8" width="2.6" height="1.7" fill="#f4f2f4"/><rect x="36.0" y="19.0" width="1.6" height="2.3" fill="#4f74d0"/><rect x="16.9" y="14.9" width="2.8" height="3.2" fill="#ffffff"/><rect x="12.4" y="15.4" width="2.0" height="2.8" fill="#e27aa8"/><rect x="23.1" y="19.0" width="1.3" height="1.3" fill="#eec46a"/><rect x="21.6" y="14.0" width="2.4" height="1.9" fill="#6a58c4"/><rect x="36.9" y="38.6" width="3.1" height="1.9" fill="#e27aa8"/><rect x="9.4" y="22.6" width="1.9" height="2.2" fill="#e8e4f4"/><rect x="26.1" y="8.1" width="3.0" height="1.9" fill="#f2a6c4"/><rect x="8.8" y="28.5" width="3.0" height="2.8" fill="#6a58c4"/><rect x="12.6" y="35.6" width="2.1" height="2.5" fill="#7f6fd6"/><rect x="32.4" y="38.1" width="2.0" height="2.0" fill="#7f6fd6"/><rect x="29.9" y="13.3" width="1.5" height="1.5" fill="#e8e4f4"/><rect x="21.4" y="28.3" width="2.4" height="2.4" fill="#d86fa0"/><rect x="27.7" y="18.9" width="2.3" height="1.5" fill="#5a86dc"/><rect x="32.4" y="30.5" width="1.4" height="2.7" fill="#9a7ad8"/><rect x="20.3" y="35.0" width="2.9" height="1.6" fill="#eec46a"/><rect x="13.0" y="23.5" width="2.7" height="1.9" fill="#4f74d0"/><rect x="19.8" y="12.1" width="3.0" height="1.9" fill="#d86fa0"/><rect x="27.9" y="33.3" width="2.2" height="2.9" fill="#e8e4f4"/><rect x="22.6" y="24.5" width="2.2" height="1.2" fill="#d86fa0"/><rect x="31.6" y="26.9" width="2.8" height="1.5" fill="#9a7ad8"/><rect x="21.6" y="30.5" width="2.3" height="1.9" fill="#4f74d0"/><rect x="23.5" y="23.0" width="2.8" height="3.0" fill="#5a86dc"/><rect x="14.2" y="16.6" width="2.7" height="2.2" fill="#4f74d0"/><rect x="6.9" y="35.7" width="1.3" height="1.9" fill="#4f74d0"/><rect x="26.0" y="14.2" width="1.8" height="2.2" fill="#6a58c4"/><rect x="21.8" y="37.2" width="2.6" height="3.0" fill="#e8e4f4"/><rect x="14.6" y="25.3" width="3.1" height="2.9" fill="#9a7ad8"/><rect x="19.7" y="20.2" width="1.8" height="2.5" fill="#a8c4f0"/><rect x="8.4" y="28.8" width="2.8" height="3.0" fill="#9a7ad8"/><rect x="37.0" y="27.9" width="1.9" height="1.7" fill="#9a7ad8"/><rect x="37.9" y="14.8" width="3.1" height="2.0" fill="#d86fa0"/><rect x="11.4" y="28.7" width="1.6" height="2.6" fill="#4f74d0"/><rect x="19.3" y="21.1" width="1.9" height="1.4" fill="#f4f2f4"/><rect x="6.6" y="25.2" width="2.1" height="1.2" fill="#f4f2f4"/><rect x="23.1" y="17.2" width="3.1" height="1.4" fill="#e8e4f4"/><rect x="32.0" y="38.1" width="1.4" height="1.7" fill="#5a86dc"/><rect x="35.9" y="13.6" width="2.7" height="2.8" fill="#ffffff"/><rect x="36.1" y="33.4" width="1.7" height="1.5" fill="#e8e4f4"/><rect x="23.0" y="23.3" width="1.9" height="1.8" fill="#6a58c4"/><rect x="28.7" y="21.2" width="1.3" height="3.1" fill="#f2a6c4"/><rect x="8.9" y="16.1" width="2.4" height="1.6" fill="#eec46a"/><rect x="34.5" y="22.1" width="1.9" height="2.3" fill="#e8e4f4"/><rect x="36.2" y="27.3" width="1.3" height="2.6" fill="#7f6fd6"/><rect x="38.0" y="16.1" width="1.6" height="3.1" fill="#f2a6c4"/><rect x="16.1" y="31.5" width="1.8" height="2.2" fill="#9a7ad8"/><rect x="14.9" y="32.9" width="3.2" height="1.3" fill="#5a86dc"/><rect x="30.2" y="25.1" width="1.6" height="2.1" fill="#e8e4f4"/><rect x="20.8" y="28.4" width="2.5" height="2.5" fill="#4f74d0"/><rect x="33.5" y="20.2" width="2.2" height="2.6" fill="#e27aa8"/><rect x="17.3" y="33.8" width="2.6" height="2.5" fill="#a8c4f0"/><rect x="38.7" y="38.4" width="2.9" height="1.2" fill="#f2a6c4"/><rect x="30.4" y="15.9" width="1.5" height="1.4" fill="#ffffff"/><rect x="18.6" y="23.7" width="3.1" height="2.4" fill="#7cc6e6"/><rect x="15.7" y="22.2" width="1.5" height="2.1" fill="#eec46a"/><rect x="18.0" y="18.2" width="3.2" height="1.8" fill="#5a86dc"/><rect x="37.9" y="17.6" width="1.9" height="1.2" fill="#a8c4f0"/><rect x="8.8" y="16.6" width="2.5" height="1.7" fill="#6a58c4"/><rect x="6.2" y="16.2" width="1.4" height="2.0" fill="#5a86dc"/><rect x="19.0" y="17.3" width="2.5" height="1.4" fill="#4f74d0"/><rect x="34.2" y="12.8" width="3.0" height="2.8" fill="#c29ae8"/><rect x="18.9" y="18.1" width="3.2" height="1.5" fill="#7cc6e6"/><rect x="26.4" y="12.5" width="2.8" height="2.6" fill="#4f74d0"/><rect x="26.7" y="30.7" width="2.8" height="1.5" fill="#4f74d0"/><rect x="30.8" y="25.6" width="2.8" height="1.2" fill="#f2a6c4"/><rect x="25.3" y="35.7" width="2.6" height="2.6" fill="#e27aa8"/><rect x="8.8" y="9.3" width="2.5" height="3.1" fill="#a8c4f0"/><rect x="33.6" y="25.3" width="2.5" height="2.5" fill="#f2a6c4"/><rect x="14.1" y="16.2" width="2.1" height="1.3" fill="#e8e4f4"/><rect x="22.6" y="24.6" width="2.5" height="1.3" fill="#7cc6e6"/><rect x="21.6" y="33.1" width="2.9" height="1.7" fill="#6a58c4"/><rect x="12.8" y="30.9" width="3.2" height="2.2" fill="#a8c4f0"/><rect x="8.5" y="36.2" width="1.8" height="1.3" fill="#f2a6c4"/><rect x="27.2" y="10.4" width="1.5" height="1.7" fill="#7cc6e6"/><rect x="28.9" y="27.3" width="1.5" height="2.2" fill="#d86fa0"/><rect x="14.9" y="28.8" width="2.6" height="2.6" fill="#eec46a"/><rect x="29.4" y="16.9" width="2.1" height="2.7" fill="#e8e4f4"/><rect x="24.1" y="17.7" width="1.4" height="2.1" fill="#eec46a"/><rect x="21.1" y="33.4" width="3.1" height="2.1" fill="#eec46a"/><rect x="18.8" y="36.4" width="3.1" height="1.3" fill="#7f6fd6"/><rect x="10.7" y="24.2" width="3.1" height="1.5" fill="#ffffff"/><rect x="26.8" y="16.7" width="1.4" height="1.9" fill="#d86fa0"/><rect x="35.6" y="23.1" width="1.2" height="1.2" fill="#d86fa0"/><rect x="28.5" y="20.6" width="2.7" height="2.0" fill="#a8c4f0"/><rect x="16.4" y="34.0" width="1.2" height="2.7" fill="#ffffff"/><rect x="19.1" y="37.1" width="1.6" height="1.2" fill="#7cc6e6"/><rect x="15.6" y="19.5" width="2.0" height="3.2" fill="#c29ae8"/><rect x="8.5" y="36.7" width="2.7" height="2.9" fill="#eec46a"/><rect x="9.4" y="33.9" width="1.8" height="3.1" fill="#e27aa8"/><rect x="38.0" y="21.5" width="1.8" height="2.7" fill="#6a58c4"/><rect x="37.6" y="35.4" width="2.8" height="2.5" fill="#e8e4f4"/><rect x="34.9" y="25.2" width="1.6" height="1.4" fill="#e8e4f4"/><rect x="30.2" y="22.0" width="2.7" height="2.5" fill="#eec46a"/><rect x="22.0" y="36.3" width="2.3" height="1.5" fill="#a8c4f0"/><rect x="17.3" y="17.2" width="2.7" height="3.2" fill="#eec46a"/><rect x="19.4" y="15.4" width="2.2" height="2.5" fill="#7f6fd6"/><rect x="11.5" y="13.0" width="1.6" height="3.0" fill="#d86fa0"/><rect x="24.2" y="22.0" width="1.9" height="2.7" fill="#a8c4f0"/><rect x="10.6" y="14.0" width="1.4" height="1.9" fill="#7f6fd6"/><rect x="16.5" y="19.4" width="2.8" height="1.6" fill="#5a86dc"/><rect x="30.7" y="20.8" width="2.0" height="2.2" fill="#a8c4f0"/><rect x="14.9" y="31.3" width="2.2" height="2.3" fill="#f4f2f4"/><rect x="10.2" y="23.6" width="2.5" height="2.9" fill="#e27aa8"/><rect x="9.1" y="35.8" width="2.0" height="2.5" fill="#a8c4f0"/><rect x="37.5" y="34.3" width="2.9" height="1.2" fill="#5a86dc"/><rect x="20.0" y="31.7" width="2.8" height="3.1" fill="#d86fa0"/><rect x="6.0" y="20.1" width="3.1" height="2.9" fill="#ffffff"/><rect x="21.4" y="21.9" width="2.8" height="1.6" fill="#9a7ad8"/><rect x="23.2" y="29.1" width="3.1" height="2.6" fill="#f2a6c4"/><rect x="33.9" y="35.7" width="1.4" height="2.8" fill="#5a86dc"/><rect x="31.8" y="15.2" width="3.0" height="2.5" fill="#eec46a"/><rect x="37.8" y="27.4" width="2.3" height="2.1" fill="#6a58c4"/><rect x="9.7" y="10.2" width="2.2" height="2.4" fill="#a8c4f0"/><rect x="14.6" y="32.5" width="1.2" height="2.3" fill="#d86fa0"/><rect x="15.2" y="17.8" width="2.9" height="1.7" fill="#4f74d0"/><rect x="13.7" y="15.7" width="3.1" height="2.6" fill="#eec46a"/><rect x="7.8" y="14.0" width="3.0" height="2.5" fill="#7f6fd6"/><rect x="14.5" y="28.7" width="3.1" height="1.7" fill="#5a86dc"/><rect x="29.0" y="30.3" width="1.9" height="2.0" fill="#5a86dc"/><rect x="32.3" y="30.9" width="2.2" height="1.6" fill="#e27aa8"/><rect x="16.3" y="33.4" width="1.7" height="1.6" fill="#6a58c4"/><rect x="35.3" y="11.4" width="2.4" height="2.4" fill="#e8e4f4"/><rect x="13.4" y="20.9" width="2.5" height="3.1" fill="#9a7ad8"/><rect x="36.4" y="9.7" width="1.2" height="2.4" fill="#a8c4f0"/><rect x="7.7" y="9.9" width="2.0" height="3.0" fill="#e8e4f4"/><rect x="16.4" y="11.5" width="1.4" height="1.5" fill="#e27aa8"/><rect x="12.1" y="37.0" width="2.7" height="1.3" fill="#f2a6c4"/><rect x="29.9" y="34.0" width="3.2" height="2.1" fill="#7f6fd6"/><rect x="6.1" y="16.7" width="1.9" height="3.1" fill="#7f6fd6"/><rect x="24.5" y="31.5" width="2.0" height="2.7" fill="#eec46a"/><rect x="33.1" y="21.4" width="1.3" height="2.1" fill="#f4f2f4"/><rect x="23.9" y="21.8" width="1.8" height="2.7" fill="#d86fa0"/><rect x="7.0" y="20.7" width="2.8" height="2.7" fill="#5a86dc"/><rect x="18.4" y="22.4" width="2.8" height="1.3" fill="#e27aa8"/><rect x="30.7" y="35.9" width="1.9" height="1.7" fill="#c29ae8"/><rect x="7.4" y="31.1" width="2.6" height="3.0" fill="#eec46a"/><rect x="6.1" y="31.4" width="3.0" height="2.5" fill="#7f6fd6"/><rect x="6.8" y="15.2" width="2.2" height="3.1" fill="#6a58c4"/><rect x="18.8" y="15.8" width="2.1" height="2.2" fill="#e8e4f4"/><rect x="22.4" y="8.3" width="3.1" height="1.8" fill="#7cc6e6"/><rect x="31.5" y="26.8" width="1.9" height="1.8" fill="#f4f2f4"/><rect x="31.9" y="26.5" width="2.2" height="2.0" fill="#9a7ad8"/><rect x="14.2" y="10.0" width="1.3" height="2.3" fill="#f4f2f4"/><rect x="11.3" y="21.2" width="1.4" height="1.3" fill="#c29ae8"/><rect x="8.8" y="11.0" width="2.2" height="2.6" fill="#d86fa0"/><rect x="11.7" y="12.1" width="2.1" height="3.0" fill="#e27aa8"/><rect x="30.7" y="34.3" width="2.5" height="1.4" fill="#ffffff"/><rect x="15.7" y="16.7" width="1.7" height="1.7" fill="#eec46a"/><rect x="12.6" y="15.7" width="1.7" height="1.5" fill="#e8e4f4"/><rect x="35.9" y="13.8" width="1.3" height="1.7" fill="#e27aa8"/><rect x="22.7" y="15.2" width="2.8" height="2.5" fill="#5a86dc"/><rect x="9.4" y="22.7" width="2.8" height="2.9" fill="#e8e4f4"/><rect x="18.3" y="35.2" width="1.7" height="1.3" fill="#c29ae8"/><rect x="38.1" y="26.1" width="3.1" height="1.9" fill="#ffffff"/><rect x="11.9" y="26.7" width="2.7" height="2.5" fill="#5a86dc"/><rect x="9.5" y="26.5" width="2.4" height="1.6" fill="#f4f2f4"/><rect x="17.2" y="9.4" width="3.2" height="1.3" fill="#7cc6e6"/><rect x="27.5" y="14.3" width="1.2" height="1.9" fill="#f2a6c4"/><rect x="18.3" y="27.3" width="1.4" height="1.3" fill="#d86fa0"/><rect x="24.1" y="10.0" width="1.4" height="2.0" fill="#4f74d0"/><rect x="11.1" y="24.6" width="2.5" height="2.0" fill="#eec46a"/><rect x="19.5" y="16.8" width="1.8" height="3.1" fill="#eec46a"/><rect x="30.6" y="35.4" width="2.0" height="1.2" fill="#6a58c4"/><rect x="38.9" y="19.3" width="1.6" height="2.7" fill="#e27aa8"/><rect x="37.1" y="21.5" width="1.5" height="1.4" fill="#7f6fd6"/><rect x="19.4" y="35.4" width="2.1" height="1.5" fill="#5a86dc"/><rect x="7.7" y="12.4" width="2.8" height="2.0" fill="#c29ae8"/><rect x="26.5" y="19.5" width="2.2" height="1.5" fill="#eec46a"/><rect x="11.3" y="13.3" width="1.3" height="2.0" fill="#6a58c4"/><rect x="32.6" y="38.0" width="1.6" height="1.5" fill="#5a86dc"/><rect x="38.2" y="23.0" width="1.3" height="3.1" fill="#a8c4f0"/><rect x="8.8" y="30.1" width="2.6" height="3.0" fill="#f2a6c4"/><rect x="31.9" y="14.9" width="2.0" height="2.9" fill="#ffffff"/><rect x="21.6" y="25.5" width="1.3" height="3.1" fill="#9a7ad8"/><rect x="18.7" y="11.8" width="1.7" height="2.6" fill="#e8e4f4"/><rect x="12.4" y="35.4" width="2.9" height="2.5" fill="#f2a6c4"/><rect x="33.7" y="11.6" width="2.4" height="2.3" fill="#f2a6c4"/><rect x="31.7" y="28.1" width="1.8" height="1.7" fill="#a8c4f0"/><rect x="27.7" y="21.9" width="2.1" height="1.2" fill="#c29ae8"/><rect x="38.5" y="22.4" width="2.1" height="2.4" fill="#ffffff"/><rect x="21.1" y="13.6" width="2.1" height="1.4" fill="#9a7ad8"/><rect x="17.8" y="19.3" width="2.8" height="2.2" fill="#f2a6c4"/><rect x="7.3" y="27.7" width="1.4" height="2.7" fill="#6a58c4"/><rect x="29.8" y="10.5" width="2.7" height="3.0" fill="#f2a6c4"/><rect x="37.4" y="12.2" width="2.9" height="3.2" fill="#7cc6e6"/><rect x="28.9" y="11.4" width="1.5" height="3.0" fill="#eec46a"/><rect x="37.6" y="36.4" width="1.5" height="2.8" fill="#e8e4f4"/><rect x="13.3" y="33.8" width="2.4" height="1.7" fill="#f4f2f4"/><rect x="35.6" y="16.5" width="2.8" height="1.5" fill="#4f74d0"/><rect x="37.8" y="22.9" width="2.4" height="2.4" fill="#e27aa8"/><rect x="16.5" y="9.1" width="1.6" height="1.5" fill="#e8e4f4"/><rect x="15.2" y="18.2" width="2.0" height="2.8" fill="#eec46a"/><rect x="9.8" y="24.5" width="2.5" height="1.9" fill="#ffffff"/><rect x="21.0" y="24.2" width="2.6" height="3.0" fill="#eec46a"/><rect x="38.8" y="27.5" width="2.0" height="2.8" fill="#eec46a"/><rect x="18.4" y="19.4" width="1.5" height="1.9" fill="#7f6fd6"/><rect x="20.6" y="13.5" width="2.7" height="1.3" fill="#ffffff"/><rect x="23.0" y="17.6" width="3.1" height="2.9" fill="#e8e4f4"/><rect x="27.9" y="17.7" width="1.2" height="1.3" fill="#9a7ad8"/><rect x="15.6" y="27.4" width="2.0" height="1.9" fill="#5a86dc"/><rect x="10.4" y="15.0" width="2.5" height="1.2" fill="#5a86dc"/><rect x="24.7" y="17.4" width="2.2" height="2.3" fill="#a8c4f0"/><rect x="25.3" y="26.3" width="1.6" height="2.4" fill="#d86fa0"/><rect x="11.2" y="8.4" width="2.8" height="2.6" fill="#d86fa0"/><rect x="9.2" y="27.8" width="2.9" height="2.8" fill="#a8c4f0"/><rect x="32.8" y="38.0" width="1.3" height="2.8" fill="#e8e4f4"/><rect x="17.6" y="28.0" width="2.1" height="3.1" fill="#7cc6e6"/><rect x="22.3" y="13.1" width="1.2" height="1.3" fill="#5a86dc"/><rect x="19.4" y="15.4" width="1.3" height="2.8" fill="#5a86dc"/><rect x="26.2" y="28.4" width="1.6" height="2.0" fill="#4f74d0"/><rect x="26.1" y="23.7" width="2.5" height="2.8" fill="#9a7ad8"/><rect x="22.8" y="10.0" width="2.5" height="3.2" fill="#7cc6e6"/><rect x="31.8" y="30.2" width="1.2" height="2.9" fill="#7cc6e6"/><rect x="36.1" y="10.5" width="2.5" height="1.6" fill="#7f6fd6"/><rect x="14.6" y="28.0" width="1.4" height="3.0" fill="#e8e4f4"/><rect x="28.9" y="34.2" width="2.6" height="1.7" fill="#4f74d0"/><rect x="28.4" y="29.3" width="3.0" height="3.1" fill="#eec46a"/><rect x="27.2" y="37.9" width="1.6" height="3.0" fill="#5a86dc"/><rect x="11.6" y="36.0" width="2.9" height="1.6" fill="#9a7ad8"/><rect x="30.6" y="18.1" width="3.0" height="1.9" fill="#e27aa8"/><rect x="18.5" y="34.4" width="3.0" height="3.2" fill="#ffffff"/><rect x="38.3" y="22.6" width="2.9" height="2.6" fill="#ffffff"/><rect x="6.9" y="37.6" width="1.7" height="3.0" fill="#6a58c4"/><rect x="13.0" y="27.3" width="1.4" height="3.0" fill="#9a7ad8"/>
<rect x="5" y="6.5" width="35.5" height="8" fill="#ffffff" opacity="0.15"/></g>
<rect x="5" y="6.5" width="35.5" height="33.5" fill="none" stroke="#f6f0e6" stroke-width="1.1"/>
<path d="M5 12.5 Q5.5 15.5 9 15.5 H36 Q40.5 15.5 40.5 12" fill="none" stroke="#fbf7f0" stroke-width="1.5"/>
<path d="M0 22 Q4.5 20 7 25 Q8.5 32 6.5 41 H0Z" fill="#efc6ae" opacity="0.9"/>
</g></svg>
<div class="t" style="left:348px;top:404.30px;font-size:10px;color:#222;font-weight:bold;letter-spacing:-0.3px">星星发夹女2024新款少女bb夹刘海夹子前额</div>
<div class="t" style="left:348px;top:418.50px;font-size:10px;color:#222;font-weight:bold">多巴胺DIY宝宝夹子发卡</div>
<div class="box" style="left:347.4px;top:431.3px;width:22.80px;height:13.30px;border:1px solid #d9d9d9;border-radius:2px"></div>
<div class="t" style="left:350.8px;top:433.85px;font-size:8.3px;color:#666;">发夹</div>
<div class="box" style="left:374.4px;top:431.3px;width:38.00px;height:13.30px;border:1px solid #d9d9d9;border-radius:2px"></div>
<div class="t" style="left:377.5px;top:433.85px;font-size:8.3px;color:#666;">27个SKU</div>
<div class="t" style="left:298px;top:450.70px;font-size:8.2px;color:#3a6cf6;">信息分</div>
<div class="t" style="left:328.5px;top:450.50px;font-size:8.6px;color:#3a6cf6;font-weight:bold">78</div>
<div class="t" style="left:347.8px;top:451.10px;font-size:8.2px;color:#555;">商品编码：10030537798706</div>
<div class="t" style="left:347.8px;top:462.90px;font-size:8.2px;color:#555;">货号：XX97541</div>
<div class="t" style="left:573.7px;top:404.40px;font-size:10.2px;color:#222;font-weight:bold">13127900</div>
<div class="t" style="left:662.2px;top:404.40px;font-size:10.2px;color:#222;font-weight:bold">¥8.20</div>
<div class="t" style="left:772.9px;top:404.10px;font-size:9.4px;color:#555;">2025-07-15 18:05:34</div>
<div class="a" style="left:773px;top:421.6px;width:5.2px;height:5.2px;border-radius:50%;background:#1cb274"></div>
<div class="t" style="left:784.3px;top:419.70px;font-size:9.4px;color:#333;">上架中</div>
<div class="t" style="left:889.3px;top:403.80px;font-size:9.4px;color:#555;">2025-07-15</div>
<div class="t" style="left:889.3px;top:419.20px;font-size:9.4px;color:#555;">18:05:34</div>
<div class="t" style="left:973.1px;top:403.80px;font-size:9.4px;color:#555;">2025-07-16</div>
<div class="t" style="left:973.1px;top:419.20px;font-size:9.4px;color:#555;">07:41:38</div>
<div class="t" style="left:1058px;top:403.60px;font-size:9.4px;color:#ee2222;-webkit-text-stroke:0.2px #ee2222">27 <span style="font-size:8.2px">个商品需</span></div>
<div class="t" style="left:1109px;top:404.10px;font-size:9px;color:#ee2222;-webkit-text-stroke:0.2px #ee2222">立即激活</div>
<div class="a" style="left:1057.6px;top:421.0px;width:7.6px;height:7.6px;border-radius:50%;background:#ee2222;color:#fff;font-size:6px;line-height:7.6px;text-align:center;font-weight:bold">1</div>
<div class="t" style="left:1068px;top:420.75px;font-size:8.1px;color:#555;">价格调至4星及以上</div>
<div class="a" style="left:1057.6px;top:433.0px;width:7.6px;height:7.6px;border-radius:50%;background:#ee2222;color:#fff;font-size:6px;line-height:7.6px;text-align:center;font-weight:bold">2</div>
<div class="t" style="left:1068px;top:432.75px;font-size:8.1px;color:#555;">入京东仓库或使用京东物流</div>
<div class="a" style="left:1057.6px;top:445.6px;width:7.6px;height:7.6px;border-radius:50%;background:#ee2222;color:#fff;font-size:6px;line-height:7.6px;text-align:center;font-weight:bold">3</div>
<div class="t" style="left:1068px;top:445.35px;font-size:8.1px;color:#555;">持续保障广告投入</div>
<div class="t" style="left:1058px;top:460.30px;font-size:7.8px;color:#bbb;">* 完成一项或多项，撤销</div>
<div class="a" style="left:1138px;top:348.5px;width:100px;height:130px;background:#fff;box-shadow:-4px 0 6px -3px rgba(0,0,0,0.12)"></div>
<div class="box" style="left:1138px;top:348.5px;width:102.00px;height:43.00px;background:#f6f6f6"></div>
<div class="t" style="left:1146.5px;top:365.70px;font-size:9.8px;color:#222;letter-spacing:-0.40px;font-weight:bold">操作</div>
<div class="t" style="left:1146.5px;top:404.65px;font-size:9.7px;color:#3a6cf6;letter-spacing:-0.23px;">修改商品</div>
<div class="t" style="left:1146.5px;top:421.15px;font-size:9.7px;color:#3a6cf6;letter-spacing:-0.23px;">下架商品</div>
<div class="t" style="left:1146.5px;top:437.35px;font-size:9.7px;color:#3a6cf6;letter-spacing:-0.20px;">发布相似品</div>
<div class="t" style="left:1146.5px;top:453.65px;font-size:9.7px;color:#3a6cf6;letter-spacing:-0.23px;">投放广告</div>
<div class="chev" style="left:1190px;top:454.5px;width:4.2px;height:4.2px;border-color:#3a6cf6"></div>
<div class="t" style="left:1146.5px;top:469.65px;font-size:9.7px;color:#3a6cf6;letter-spacing:-0.23px;">更多操作</div>
<div class="box" style="left:242px;top:55px;width:76.40px;height:36.00px;border:2px solid #ff0000"></div>
<div class="box" style="left:1036.3px;top:55px;width:102.50px;height:35.60px;border:2px solid #ff0000"></div>
<div class="box" style="left:95.4px;top:251.6px;width:68.80px;height:25.40px;border:2px solid #ff0000"></div>
<svg class="a" style="left:0;top:0" width="1280" height="501">
<line x1="332" y1="75.4" x2="1011" y2="72.9" stroke="#ff0000" stroke-width="2.1"/>
<polygon points="1010.2,69 1018.2,72.9 1010.2,77 1011,72.9" fill="#ff0000"/>
<line x1="163" y1="244.5" x2="225.2" y2="96" stroke="#ff0000" stroke-width="2.2"/>
<polygon points="228.6,88 229.2,97.2 221.6,93.8" fill="#ff0000"/>
</svg>
<!-- MAINEND -->

</div></div>
</body></html>
